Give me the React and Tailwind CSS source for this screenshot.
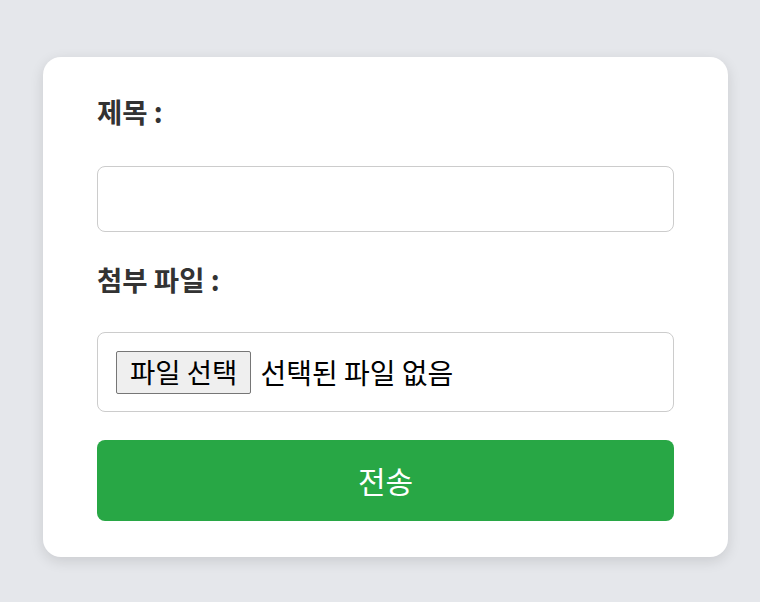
export default function App() {
  const font = { fontFamily: '"Noto Sans CJK KR", "Noto Sans", sans-serif' };
  return (
    <div className="min-h-screen bg-[#e5e7eb] pt-[57px] pl-[43px]" style={font}>
      <div className="w-[685px] rounded-[18px] bg-white px-[54px] pt-[36px] pb-[36px] shadow-[0_4px_14px_rgba(0,0,0,0.12)]">
        <div className="h-9 leading-9 text-[27.5px] font-bold text-[#333333]">제목 :</div>
        <div className="mt-[37px] h-[66px] rounded-[8px] border border-[#cccccc] bg-white"></div>
        <div className="mt-[29px] h-9 leading-9 text-[27.5px] font-bold text-[#333333]">첨부 파일 :</div>
        <div className="mt-[35px] flex h-[80px] items-center rounded-[8px] border border-[#cccccc] bg-white pl-[18px]">
          <span className="flex h-[43px] items-center rounded-[2px] border border-[#767676] bg-[#efefef] px-[13px] text-[27.5px] leading-none text-black">
            파일 선택
          </span>
          <span className="ml-[9px] text-[28px] leading-none text-black">선택된 파일 없음</span>
        </div>
        <div className="mt-[28px] flex h-[81px] items-center justify-center rounded-[8px] bg-[#28a745] text-[30px] text-white">
          전송
        </div>
      </div>
    </div>
  );
}
